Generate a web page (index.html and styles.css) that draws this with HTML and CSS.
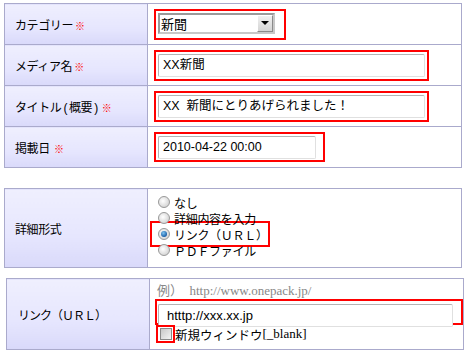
FILE: index.html
```html
<!DOCTYPE html>
<html lang="ja">
<head>
<meta charset="utf-8">
<link rel="stylesheet" href="styles.css">
</head>
<body>
<table class="form">
  <tr>
    <td class="label">カテゴリー<span class="req">※</span></td>
    <td class="value">
      <div class="mark w-cat">
        <div class="select"><span class="sel-text">新聞</span><span class="sel-btn"><span class="tri"></span></span></div>
      </div>
    </td>
  </tr>
  <tr>
    <td class="label">メディア名<span class="req">※</span></td>
    <td class="value"><div class="mark w-long"><div class="input">XX新聞</div></div></td>
  </tr>
  <tr>
    <td class="label">タイトル<span class="paren">(</span>概要<span class="paren">)</span><span class="req">※</span></td>
    <td class="value"><div class="mark w-long"><div class="input">XX&nbsp;&nbsp;新聞にとりあげられました！</div></div></td>
  </tr>
  <tr>
    <td class="label">掲載日 <span class="req">※</span></td>
    <td class="value"><div class="mark w-date"><div class="input date">2010-04-22 00:00</div></div></td>
  </tr>
</table>

<table class="form form2">
  <tr>
    <td class="label">詳細形式</td>
    <td class="value radios">
      <div class="radio-row"><span class="radio"></span>なし</div>
      <div class="radio-row"><span class="radio"></span>詳細内容を入力</div>
      <div class="radio-row marked"><span class="radio on"></span>リンク（ＵＲＬ）</div>
      <div class="radio-row last"><span class="radio"></span>ＰＤＦファイル</div>
    </td>
  </tr>
</table>

<table class="form form3">
  <tr>
    <td class="label">リンク（ＵＲＬ）</td>
    <td class="value link">
      <div class="example">例）&nbsp;&nbsp;http://www.onepack.jp/</div>
      <div class="mark url"><div class="input urlin">htttp://xxx.xx.jp</div></div>
      <div class="check-row"><span class="mark cbox"><span class="check"></span></span>新規ウィンドウ<span class="serif">[_blank]</span></div>
    </td>
  </tr>
</table>
</body>
</html>
```

FILE: styles.css
```css
html, body {
  margin: 0;
  padding: 0;
  background: #ffffff;
}
body {
  padding: 3px 0 0 4px;
  font-family: "Liberation Sans", "Noto Sans CJK JP", sans-serif;
  font-size: 12px;
  color: #000;
}
.form {
  border-collapse: collapse;
  width: 458px;
}
.form td {
  border: 1px solid #aaaacc;
  padding: 0;
}
.form td.label {
  width: 132px;
  padding-left: 10px;
  height: 40px;
  background: linear-gradient(#efeffe, #e6e6fe 60%, #d9d9fa);
  font-family: "Noto Sans CJK JP", sans-serif;
  font-size: 12px;
  letter-spacing: -0.4px;
  vertical-align: middle;
  white-space: nowrap;
}
.paren {
  font-family: "Liberation Sans", sans-serif;
  padding: 0 2px;
}
.req {
  color: #ff0000;
  font-size: 10px;
  letter-spacing: 0;
  margin-left: 2px;
}
.form td.value {
  padding-left: 6px;
  vertical-align: middle;
}
.mark {
  border: 2px solid #ff0000;
  box-sizing: border-box;
  padding: 2px;
}
.w-cat { width: 132px; height: 31px; }
.w-long { width: 275px; height: 31px; }
.w-date { width: 171px; height: 30px; }
.select {
  width: 117px;
  height: 21px;
  box-sizing: border-box;
  border: 2px solid #9a9a9a;
  border-right-color: #c8c8c8;
  border-bottom-color: #c8c8c8;
  background: #fff;
  display: flex;
  align-items: center;
  justify-content: space-between;
}
.sel-text {
  font-size: 13px;
  padding-left: 1px;
}
.sel-btn {
  width: 16px;
  height: 17px;
  box-sizing: border-box;
  border: 1px solid #8a8a8a;
  border-top-color: #fff;
  border-left-color: #fff;
  background: linear-gradient(#f0f0f0, #d4d4d4);
  display: flex;
  align-items: center;
  justify-content: center;
}
.tri {
  width: 0;
  height: 0;
  border-left: 4px solid transparent;
  border-right: 4px solid transparent;
  border-top: 4px solid #000;
}
.input {
  height: 23px;
  box-sizing: border-box;
  border: 1px solid #b4b4b4;
  border-right-color: #e0e0e0;
  border-bottom-color: #e0e0e0;
  border-radius: 2px;
  background: #fff;
  padding-left: 4px;
  font-size: 12.5px;
  line-height: 21px;
  white-space: nowrap;
  overflow: hidden;
}
.date {
  width: 158px;
}
.form2 {
  margin-top: 20px;
}
.form2 td.label {
  height: 78px;
}
.form td.radios {
  padding: 0 0 4px 10px;
}
.radio-row {
  display: flex;
  align-items: center;
  height: 16px;
  font-family: "Noto Sans CJK JP", sans-serif;
  font-size: 12px;
  letter-spacing: -0.3px;
  white-space: nowrap;
}
.radio-row.marked {
  border: 2px solid #ff0000;
  height: 26px;
  width: 120px;
  box-sizing: border-box;
  margin: -5px 0 -5px -8px;
  padding-left: 6px;
}
.radio {
  width: 12px;
  height: 12px;
  border-radius: 50%;
  box-sizing: border-box;
  border: 1px solid #9a9a9a;
  background: radial-gradient(circle at 40% 40%, #ffffff, #d8d8d8 70%, #bdbdbd);
  margin-right: 4px;
  flex: none;
  position: relative;
}
.radio.on::after {
  content: "";
  position: absolute;
  left: 2px;
  top: 2px;
  width: 6px;
  height: 6px;
  border-radius: 50%;
  background: radial-gradient(circle at 40% 35%, #7fc4f0, #1a5fa8 70%, #0d3d7a);
}
.form3 {
  margin-top: 10px;
  margin-left: 2px;
}
.form3 td.label {
  height: 70px;
  padding-left: 11px;
  letter-spacing: -1px;
}
.link {
  padding-left: 6px;
}
.example {
  font-family: "Liberation Serif", "Noto Sans CJK JP", serif;
  font-size: 13px;
  color: #888;
  height: 16px;
  line-height: 16px;
  padding-left: 1px;
  margin-top: -2px;
}
.url {
  width: 308px;
  height: 26px;
  margin-left: -1px;
  padding: 3px 0 0 1px;
}
.urlin {
  width: 295px;
  height: 23px;
  font-size: 13px;
  padding-left: 8px;
}
.check-row {
  display: flex;
  align-items: center;
  height: 19px;
  font-family: "Noto Sans CJK JP", sans-serif;
  font-size: 12.5px;
}
.cbox {
  width: 19px;
  height: 18px;
  padding: 0;
  display: flex;
  align-items: center;
  justify-content: center;
}
.check {
  width: 12px;
  height: 12px;
  box-sizing: border-box;
  border: 1px solid #8a8a8a;
  background: linear-gradient(135deg, #c8c8c8, #f4f4f4);
}
.serif {
  font-family: "Liberation Serif", serif;
  font-size: 13px;
}
```
